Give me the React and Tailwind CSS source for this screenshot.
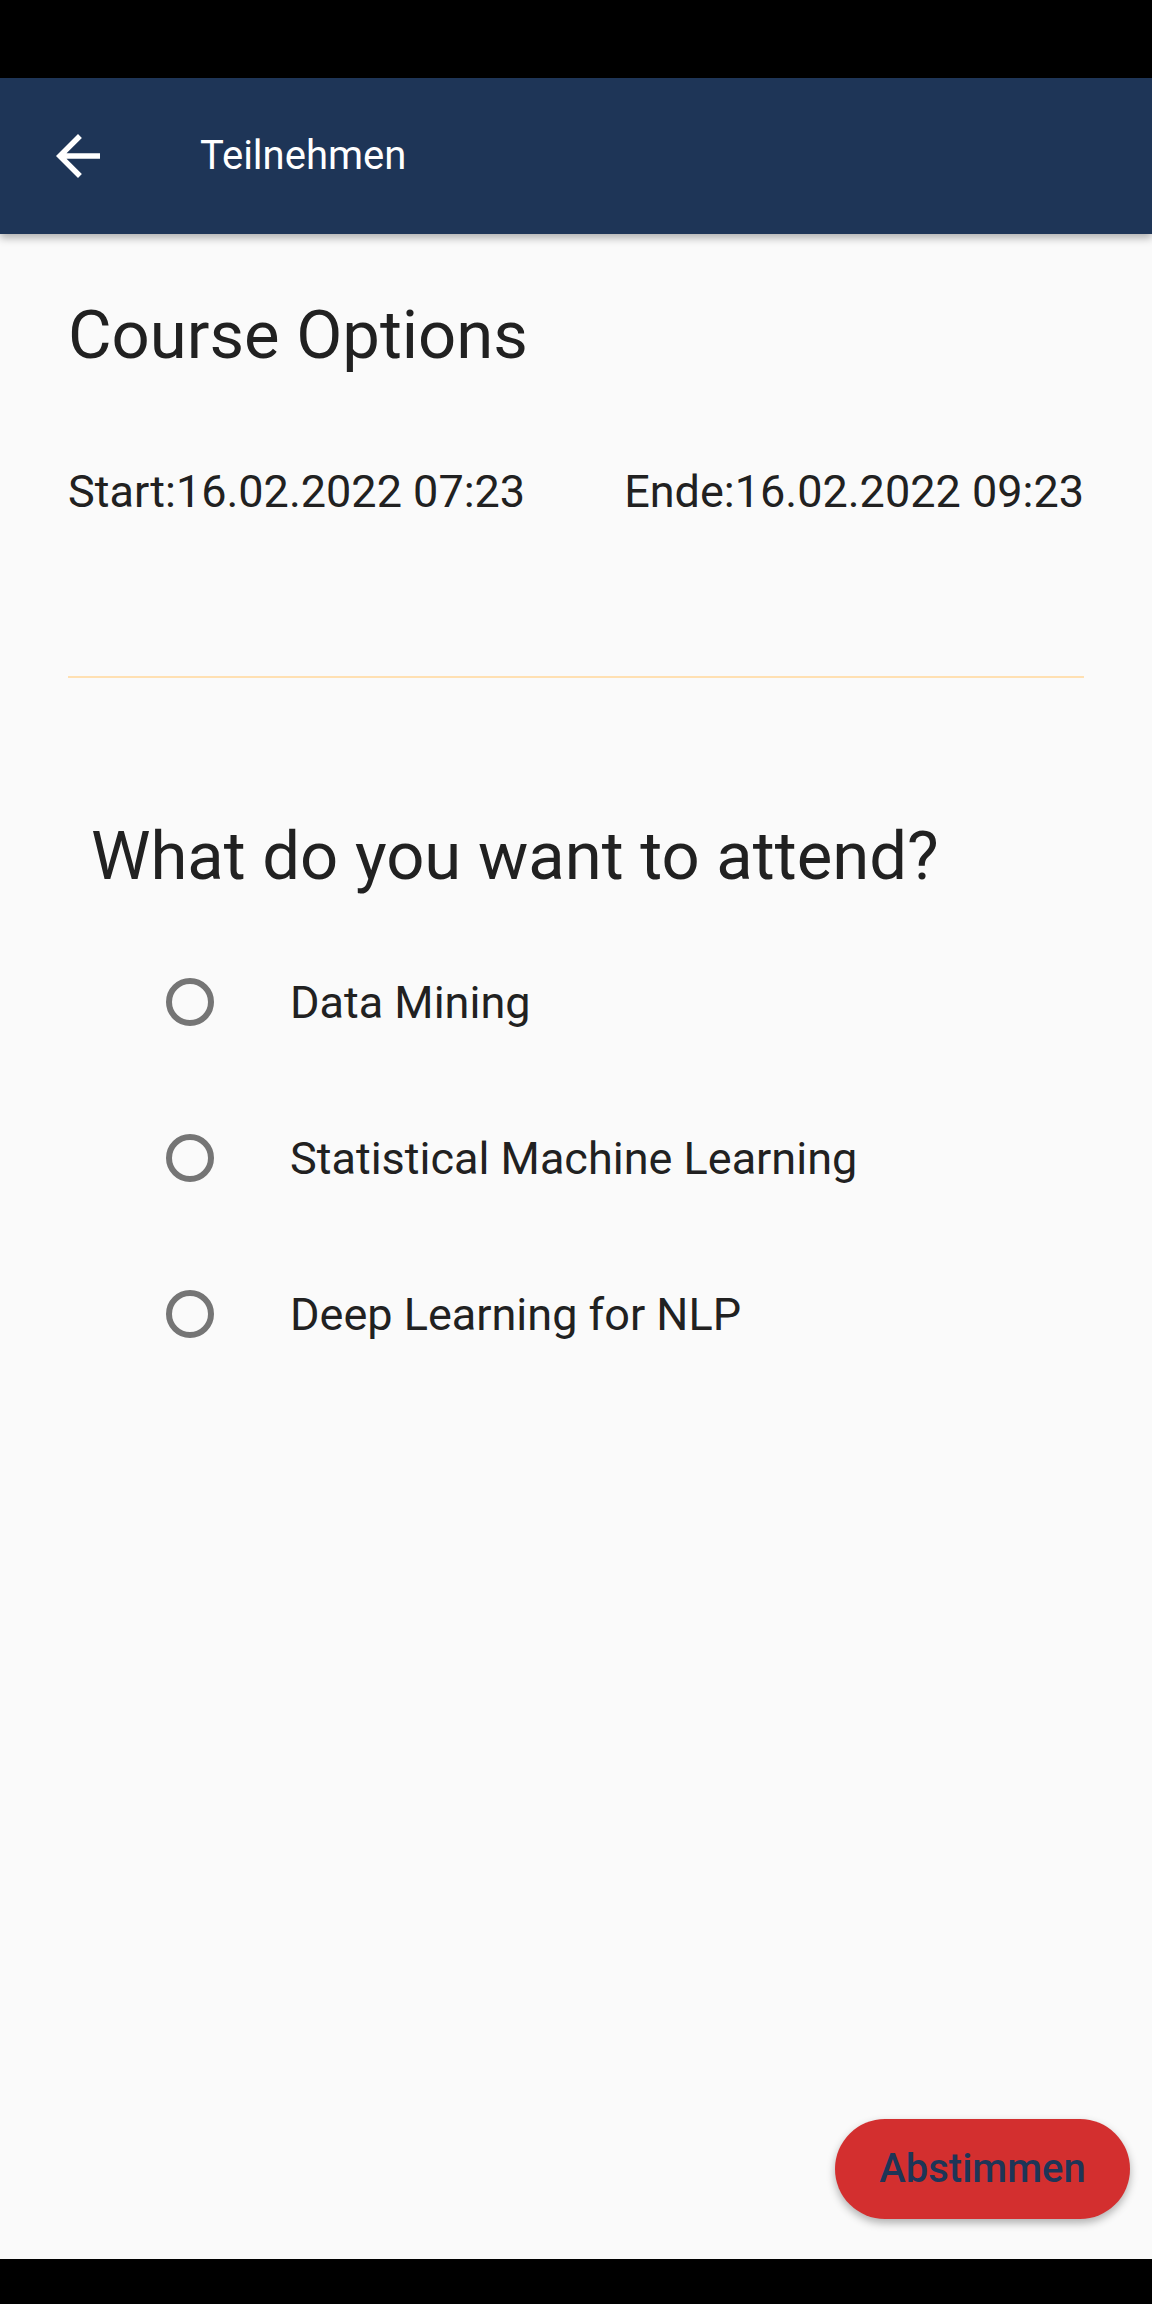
export default function App() {
  const options = ["Data Mining", "Statistical Machine Learning", "Deep Learning for NLP"];
  return (
    <div className="flex h-[2304px] w-[1152px] flex-col bg-[#fafafa] font-['Roboto',sans-serif] text-[#212121]">
      <div className="h-[78px] shrink-0 bg-black" />
      <header className="relative z-10 flex h-[156px] shrink-0 items-center bg-[#1e3557] shadow-[0_4px_8px_rgba(0,0,0,0.3)]">
        <svg viewBox="0 0 24 24" className="ml-[45px] h-[66px] w-[66px] fill-white">
          <path d="M20 11H7.83l5.59-5.59L12 4l-8 8 8 8 1.41-1.41L7.83 13H20v-2z" />
        </svg>
        <span className="ml-[89px] text-[40px] leading-none text-white">Teilnehmen</span>
      </header>
      <main className="flex flex-1 flex-col">
        <div className="px-[68px]">
          <h1 className="mt-[68px] text-[67px] leading-none">Course Options</h1>
          <div className="mt-[100px] flex justify-between text-[45px] leading-none">
            <span>Start:16.02.2022 07:23</span>
            <span>Ende:16.02.2022 09:23</span>
          </div>
          <div className="mt-[162px] h-[2px] bg-[#ffe0b2]" />
        </div>
        <h2 className="ml-[91px] mt-[145px] text-[67px] leading-none">What do you want to attend?</h2>
        <div className="mt-[34px] flex flex-col">
          {options.map((o) => (
            <div key={o} className="flex h-[156px] items-center">
              <div className="ml-[166px] h-[48px] w-[48px] rounded-full border-[6px] border-[#757575]" />
              <span className="ml-[76px] text-[45px] leading-none">{o}</span>
            </div>
          ))}
        </div>
        <div className="mt-auto mb-[40px] mr-[22px] flex justify-end">
          <button className="flex h-[100px] w-[295px] items-center justify-center rounded-full bg-[#d32f2f] text-[40px] font-medium leading-none text-[#1e3557] shadow-[0_4px_8px_rgba(0,0,0,0.3)]">
            Abstimmen
          </button>
        </div>
      </main>
      <div className="h-[45px] shrink-0 bg-black" />
    </div>
  );
}
